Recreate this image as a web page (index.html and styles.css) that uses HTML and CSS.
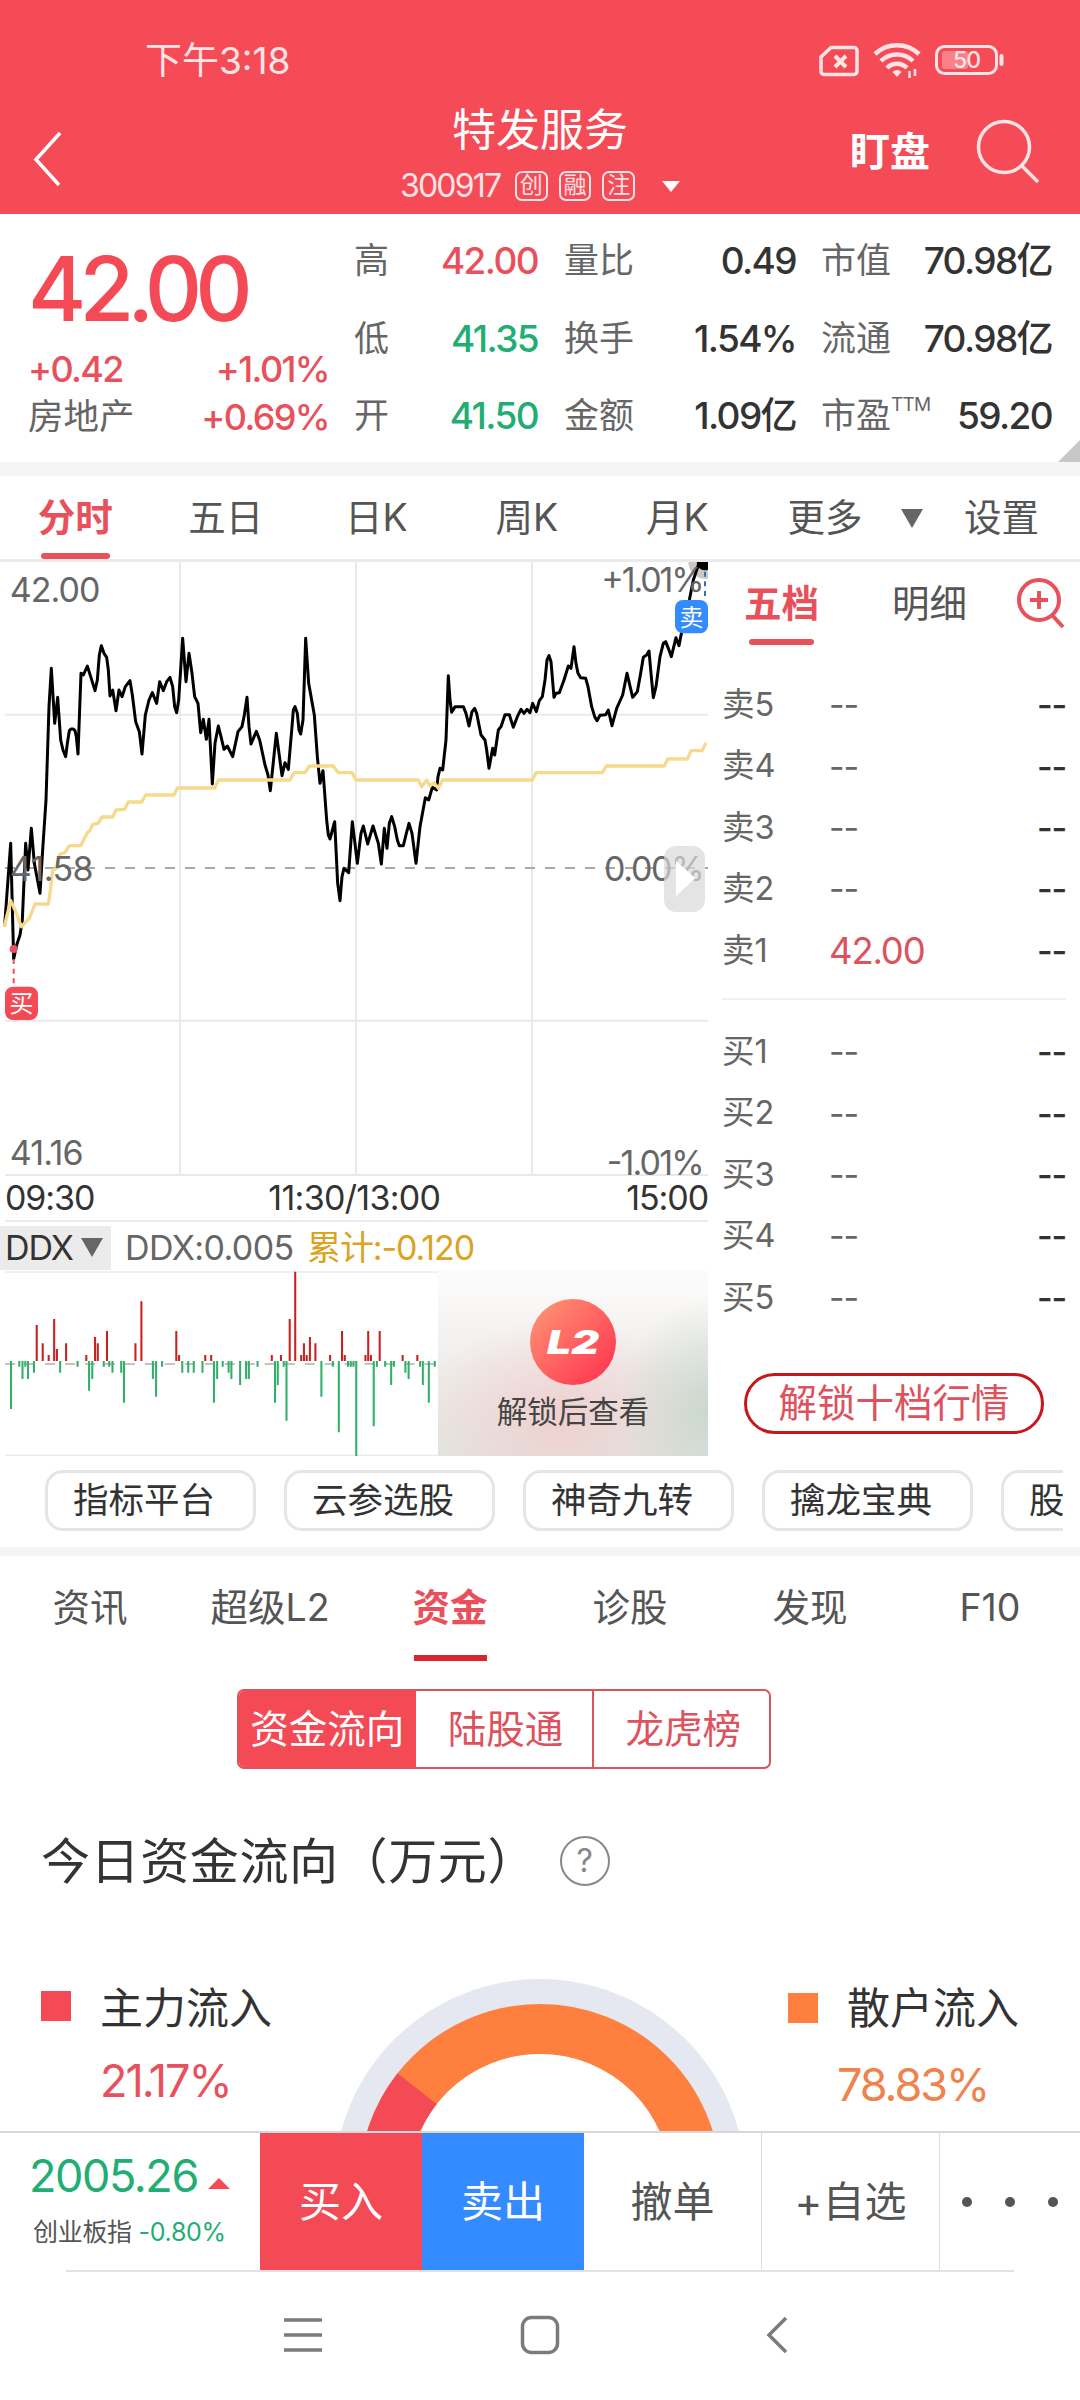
FILE: index.html
```html
<!DOCTYPE html>
<html lang="zh-CN">
<head>
    <meta charset="UTF-8">
    <meta name="viewport" content="width=device-width, initial-scale=1.0">
    <title>特发服务 300917</title>
    <link rel="stylesheet" href="styles.css">
</head>
<body>
    <header class="header">
        <div class="status-bar">
            <span class="clock">下午3:18</span>
            <svg class="status-icons" width="190" height="40" viewBox="816 40 190 40" fill="none" stroke="#ffe3e5" stroke-width="3">
                <path d="M831 47.500h23a3 3 0 0 1 3 3v21a3 3 0 0 1-3 3h-30a3 3 0 0 1-3-3V57z" stroke-width="3.500"/>
                <path d="M835 56l11 11M846 56l-11 11" stroke-width="4"/>
                <path d="M875 54a32 32 0 0 1 44 0M881 61a23 23 0 0 1 32 0M887 68a14 14 0 0 1 20 0" stroke-width="4.500"/>
                <path d="M897 77l-4.500-5a6 6 0 0 1 9 0z" fill="#ffe3e5" stroke="none"/>
                <path d="M909.500 71v7M915 69v7" stroke-width="2.500"/>
                <rect x="936.500" y="46.500" width="60" height="27" rx="8"/>
                <rect x="942" y="51" width="26" height="18" rx="3" fill="#fff" fill-opacity=".3" stroke="none"/>
                <path d="M1001.500 56v8" stroke-width="4" stroke-linecap="round"/>
                <text class="battery-text" x="966.500" y="68" text-anchor="middle">50</text>
            </svg>
        </div>
        <div class="title-bar">
            <svg class="back" width="40" height="60" viewBox="28 130 40 60" fill="none" stroke="#fff" stroke-width="3.500">
                <path d="M60 133L36 159.500 59 185"/>
            </svg>
            <div class="title">
                <h1>特发服务</h1>
                <div class="code">
                    <span class="code-num">300917</span>
                    <i class="tag">创</i><i class="tag">融</i><i class="tag">注</i>
                    <i class="caret"></i>
                </div>
            </div>
            <div class="actions">
                <b class="watch">盯盘</b>
                <svg width="68" height="68" viewBox="974 118 68 68" fill="none" stroke="#ffe3e5" stroke-width="3.500">
                    <circle cx="1004" cy="147" r="25.500"/>
                    <path d="M1021 165l17 17"/>
                </svg>
            </div>
        </div>
    </header>

    <section class="quote">
        <div class="price-box">
            <div class="price num">42.00</div>
            <div class="price-row red"><span class="num">+0.42</span><span class="num">+1.01%</span></div>
            <div class="price-row"><span class="sector">房地产</span><span class="num red">+0.69%</span></div>
        </div>
        <dl class="stats stats-a">
            <div><dt>高</dt><dd class="red">42.00</dd></div>
            <div><dt>低</dt><dd class="green">41.35</dd></div>
            <div><dt>开</dt><dd class="green">41.50</dd></div>
        </dl>
        <dl class="stats stats-b">
            <div><dt>量比</dt><dd>0.49</dd></div>
            <div><dt>换手</dt><dd>1.54%</dd></div>
            <div><dt>金额</dt><dd>1.09亿</dd></div>
        </dl>
        <dl class="stats stats-c">
            <div><dt>市值</dt><dd>70.98亿</dd></div>
            <div><dt>流通</dt><dd>70.98亿</dd></div>
            <div><dt>市盈<sup>TTM</sup></dt><dd>59.20</dd></div>
        </dl>
        <i class="corner"></i>
    </section>

    <nav class="period-tabs">
        <span class="active">分时</span>
        <span>五日</span>
        <span>日K</span>
        <span>周K</span>
        <span>月K</span>
        <span class="more">更多<i class="caret-down"></i></span>
        <span class="setting">设置</span>
    </nav>

    <main class="market">
        <div class="charts">
            <svg class="price-chart" width="708" height="614" viewBox="0 66 2124 1842">
                <path d="M540 66V1905M1068 66V1905M1596 66V1905M15 524H2124M15 1442H2124M15 1905H2124" stroke="#e9e9e9" stroke-width="6"/>
                <path d="M15 984H2124" stroke="#aaa" stroke-width="6" stroke-dasharray="30 30"/>
                <circle cx="2115" cy="66" r="50" fill="#c8c8c8"/>
                <g fill="none" stroke-linejoin="round" stroke-linecap="round">
                    <polyline stroke="#000" stroke-width="9" points="14,1155 32,910 41,1257 50,1215 60,1185 67,1140 77,910 84,990 94,865 103,970 120,1060 128,930 138,780 147,500 154,385 164,550 173,472 182,600 189,630 197,650 202,610 208,572 213,567 220,567 225,572 229,590 234,642 243,400 250,405 262,378 272,410 285,452 292,420 298,345 304,317 312,340 320,352 325,390 330,468 338,450 348,512 357,450 366,470 376,440 390,422 397,465 407,545 418,575 426,642 436,525 447,480 457,458 470,490 479,425 490,452 500,425 510,412 518,440 524,500 530,518 536,480 548,295 558,425 567,340 576,400 584,470 594,490 602,578 610,538 619,598 627,538 637,732 645,610 655,558 663,590 672,628 682,618 698,650 714,575 726,560 733,525 741,472 747,560 753,612 769,574 779,600 795,675 804,705 811,752 829,580 846,707 855,668 865,688 876,560 880,510 885,500 892,520 897,570 902,582 909,540 917,295 926,430 943,525 952,650 960,730 969,692 980,840 985,885 990,897 1004,845 1013,1030 1020,1082 1026,1010 1032,985 1046,998 1057,845 1072,970 1083,880 1090,858 1103,912 1119,858 1135,910 1144,972 1153,865 1161,925 1168,850 1175,830 1184,860 1192,900 1198,917 1210,917 1219,880 1227,850 1236,880 1248,970 1260,860 1276,773 1286,780 1297,742 1310,750 1314,710 1320,685 1328,690 1338,600 1345,407 1350,480 1355,517 1365,500 1390,500 1398,520 1407,558 1416,515 1424,505 1430,520 1443,585 1455,600 1460,630 1467,685 1478,625 1484,645 1495,570 1503,560 1515,524 1528,524 1540,562 1552,530 1563,508 1572,520 1581,508 1590,518 1598,490 1609,515 1618,482 1627,470 1635,420 1641,360 1647,347 1653,365 1662,472 1668,460 1678,458 1692,420 1705,378 1713,385 1722,320 1728,370 1734,400 1742,413 1757,415 1764,440 1775,500 1784,530 1791,542 1800,526 1817,524 1825,510 1836,557 1850,505 1868,465 1881,400 1898,472 1912,455 1922,400 1930,352 1940,345 1947,333 1953,400 1960,473 1968,440 1980,350 1990,310 1997,305 2005,325 2014,350 2028,293 2037,317 2050,250 2068,180 2080,120 2100,60"/>
                    <polyline stroke="#f7d98e" stroke-width="10" points="14,1155 32,1082 45,1110 64,1160 88,1135 105,1092 145,1092 150,1060 158,990 170,985 180,942 195,938 208,917 242,917 262,878 270,872 278,853 294,850 306,831 338,831 348,810 374,808 385,786 425,786 437,765 522,765 532,744 644,744 655,720 870,720 882,698 915,698 928,678 1000,678 1014,698 1056,698 1068,720 1255,720 1265,740 1280,720 1290,738 1302,728 1315,745 1328,720 1597,720 1608,698 1807,698 1819,678 1993,678 2003,657 2062,657 2073,632 2106,632 2116,612"/>
                </g>
                <circle cx="2115" cy="66" r="25"/>
                <path d="M2115 95V178" stroke="#3a6fb5" stroke-width="6" stroke-dasharray="15 14"/>
                <circle cx="41" cy="1227" r="12" fill="#e8515c"/>
                <path d="M41 1257V1336" stroke="#e8515c" stroke-width="6" stroke-dasharray="15 14"/>
                <g class="axis-text">
                    <text x="29" y="186" textLength="272">42.00</text>
                    <text x="29" y="1022" textLength="252">41.58</text>
                    <text x="29" y="1875" textLength="222">41.16</text>
                    <text x="1804" y="156" textLength="310">+1.01%</text>
                    <text x="1812" y="1022" textLength="302">0.00%</text>
                    <text x="1820" y="1905" textLength="294">-1.01%</text>
                </g>
                <rect x="15" y="1340" width="99" height="100" rx="24" fill="#f44a56"/>
                <text class="mark" x="64.500" y="1417">买</text>
                <rect x="2025" y="180" width="99" height="100" rx="24" fill="#348aff"/>
                <text class="mark" x="2074.500" y="257">卖</text>
                <rect x="1992" y="918" width="123" height="198" rx="36" fill="#d8d8d8" fill-opacity=".7"/>
                <path d="M2028 962V1068L2086 1015z" fill="#fff"/>
            </svg>
            <div class="time-axis"><span>09:30</span><span class="noon">11:30/13:00</span><span>15:00</span></div>
            <div class="ddx-bar">
                <span class="ddx-select">DDX<i class="caret-down"></i></span>
                <span class="ddx-value">DDX:0.005</span>
                <span class="ddx-sum">累计:-0.120</span>
            </div>
            <div class="ddx-row">
                <svg width="438" height="186" viewBox="0 210 954 558" preserveAspectRatio="none" fill="none" stroke-width="4.500">
                    <path d="M11 216H954M11 766H954" stroke="#ebebeb"/>
                    <path d="M11 492H954" stroke="#b0b0b0" stroke-width="5" stroke-dasharray="22 21.500"/>
                    <path stroke="#c92020" d="M80 483V375M93 483V430M106 483V465M118 483V357M124 483V447M144 483V430M188 483V465M207 483V411M213 483V430M233 483V393M295 483V430M308 483V304M384 483V393M390 483V465M447 483V465M460 483V465M592 483V465M612 483V465M631 483V357M643 483V215M656 483V465M662 483V430M668 483V465M675 483V411M687 483V430M719 483V465M745 483V393M751 483V465M796 483V465M802 483V393M808 483V465M827 483V393M877 483V465M909 483V465"/>
                    <path stroke="#32b068" d="M24 483V627M42 483V500M49 483V537M55 483V500M61 483V537M74 483V518M131 483V518M169 483V500M194 483V572M201 483V537M226 483V500M238 483V500M245 483V518M264 483V518M270 483V608M333 483V537M340 483V590M353 483V500M397 483V518M410 483V518M422 483V518M441 483V518M466 483V608M473 483V537M485 483V500M498 483V518M504 483V537M523 483V555M536 483V537M542 483V537M561 483V500M599 483V608M605 483V555M618 483V500M624 483V662M700 483V590M725 483V500M738 483V697M758 483V500M764 483V500M770 483V500M776 483V768M814 483V679M821 483V500M839 483V500M852 483V555M858 483V500M883 483V518M890 483V537M915 483V500M921 483V555M934 483V608M947 483V500"/>
                </svg>
                <div class="locked">
                    <span class="l2"><b>L2</b></span>
                    <span>解锁后查看</span>
                </div>
            </div>
        </div>

        <aside class="book">
            <div class="book-tabs">
                <span class="active">五档</span>
                <span>明细</span>
                <svg width="50" height="56" viewBox="1015 576 50 56" fill="none" stroke="#e8515c" stroke-width="4">
                    <circle cx="1039" cy="600" r="20"/>
                    <path d="M1030 600h18M1039 591v18M1052 615l11 12"/>
                </svg>
            </div>
            <ul class="levels sell">
                <li><span>卖5</span><em>--</em><b>--</b></li>
                <li><span>卖4</span><em>--</em><b>--</b></li>
                <li><span>卖3</span><em>--</em><b>--</b></li>
                <li><span>卖2</span><em>--</em><b>--</b></li>
                <li><span>卖1</span><em class="red">42.00</em><b>--</b></li>
            </ul>
            <ul class="levels buy">
                <li><span>买1</span><em>--</em><b>--</b></li>
                <li><span>买2</span><em>--</em><b>--</b></li>
                <li><span>买3</span><em>--</em><b>--</b></li>
                <li><span>买4</span><em>--</em><b>--</b></li>
                <li><span>买5</span><em>--</em><b>--</b></li>
            </ul>
            <button class="unlock">解锁十档行情</button>
        </aside>
    </main>

    <div class="chips">
        <span>指标平台</span>
        <span>云参选股</span>
        <span>神奇九转</span>
        <span>擒龙宝典</span>
        <span>股</span>
    </div>

    <nav class="info-tabs">
        <span>资讯</span>
        <span>超级L2</span>
        <span class="active">资金</span>
        <span>诊股</span>
        <span>发现</span>
        <span>F10</span>
    </nav>

    <section class="funds">
        <div class="segment">
            <span class="active">资金流向</span>
            <span>陆股通</span>
            <span>龙虎榜</span>
        </div>
        <h2>今日资金流向（万元）<i class="help">?</i></h2>
        <div class="flow">
            <div class="legend main-in">
                <p><i></i>主力流入</p>
                <strong class="num">21.17%</strong>
            </div>
            <svg width="420" height="155" viewBox="330 1977 420 155">
                <circle cx="540" cy="2185" r="206" fill="#e5e8f1"/>
                <circle cx="540" cy="2185" r="156" fill="none" stroke="#ff7f3f" stroke-width="50"/>
                <path d="M397.600 2073.300A181 181 0 0 0 359 2185H409A131 131 0 0 1 436.900 2104.200z" fill="#f44a56"/>
                <circle cx="540" cy="2185" r="131" fill="#fff"/>
            </svg>
            <div class="legend retail-in">
                <p><i></i>散户流入</p>
                <strong class="num">78.83%</strong>
            </div>
        </div>
    </section>

    <footer class="trade-bar">
        <div class="index">
            <div class="index-value"><span>2005.26</span><i class="caret-up"></i></div>
            <div class="index-name">创业板指 <span class="green">-0.80%</span></div>
        </div>
        <span class="btn-buy">买入</span>
        <span class="btn-sell">卖出</span>
        <span class="btn">撤单</span>
        <span class="btn">+自选</span>
        <span class="dots"><i></i><i></i><i></i></span>
    </footer>

    <div class="system-nav">
        <svg width="44" height="44" viewBox="0 0 44 44" fill="none" stroke="#7b7b7b" stroke-width="3.500"><path d="M3 7h38M3 22h38M3 37h38"/></svg>
        <svg width="44" height="44" viewBox="0 0 44 44" fill="none" stroke="#7b7b7b" stroke-width="3.500"><rect x="4.500" y="4.500" width="35" height="35" rx="9"/></svg>
        <svg width="44" height="44" viewBox="0 0 44 44" fill="none" stroke="#7b7b7b" stroke-width="3.500"><path d="M31 5L14 22l17 17"/></svg>
    </div>
</body>
</html>
```
FILE: styles.css
```css
* {
    box-sizing: border-box;
}
body {
    width: 1080px;
    height: 2400px;
    margin: 0;
    overflow: hidden;
    background: #fff;
    color: #333;
    font-family: Inter, "Noto Sans CJK SC", sans-serif;
    font-size: 36px;
    line-height: 1;
    white-space: nowrap;
}
i, em {
    font-style: normal;
}
h1, h2, p, dl, dd, ul {
    margin: 0;
    padding: 0;
    font-weight: 400;
}
svg {
    display: block;
    flex: none;
}
.num {
    letter-spacing: -0.045em;
}
.red {
    color: #e8515c;
}
.green {
    color: #22ad74;
}

/* header */
.header {
    height: 214px;
    background: #f54b57;
    color: #fff;
}
.status-bar {
    display: flex;
    justify-content: space-between;
    height: 100px;
    padding: 40px 74px 0 145px;
    color: #ffe3e5;
}
.clock {
    font-size: 37px;
    line-height: 41px;
}
.battery-text {
    fill: #ffe3e5;
    stroke: none;
    font-size: 23px;
    font-weight: 500;
    letter-spacing: -1px;
}
.title-bar {
    display: grid;
    grid-template-columns: 1fr 280px 1fr;
    height: 114px;
    padding: 0 38px 0 28px;
}
.back {
    margin-top: 30px;
}
.title {
    text-align: center;
    margin-left: 5px;
    margin-right: -5px;
}
.title h1 {
    font-size: 44px;
    line-height: 61px;
}
.code {
    display: flex;
    align-items: center;
    height: 50px;
}
.code-num {
    width: 116px;
    text-align: left;
    font-size: 32px;
    letter-spacing: -1.8px;
    color: #ffe3e5;
}
.tag {
    width: 33px;
    height: 30px;
    margin-right: 11px;
    border: 2px solid #ffe3e5;
    border-radius: 7px;
    font-size: 23px;
    line-height: 25px;
    color: #ffe3e5;
}
.caret {
    margin-left: 16px;
    border: 9px solid transparent;
    border-top: 11px solid #fff;
    border-bottom: 0;
}
.actions {
    display: flex;
    justify-content: flex-end;
    gap: 44px;
    padding-top: 18px;
}
.watch {
    font-size: 40px;
    line-height: 68px;
}

/* quote */
.quote {
    position: relative;
    display: flex;
    height: 262px;
    padding-left: 28px;
    border-bottom: 14px solid #f5f5f5;
}
.price-box {
    width: 301px;
    padding-top: 28px;
}
.price {
    color: #f44a56;
    font-size: 89px;
    font-weight: 500;
    line-height: 94px;
    letter-spacing: -7px;
}
.price-row {
    display: flex;
    justify-content: space-between;
    height: 48px;
    align-items: center;
    font-weight: 500;
    font-size: 36px;
}
.price-box .price + .price-row {
    margin-top: 9px;
}
.sector {
    font-size: 35.500px;
    font-weight: 400;
    color: #666;
}
.stats div {
    display: flex;
    justify-content: space-between;
    align-items: center;
    height: 77.5px;
}
.stats {
    padding-top: 8px;
}
.stats dt {
    display: flex;
    font-size: 35px;
    color: #666;
}
.stats dd {
    font-size: 37px;
    font-weight: 500;
    letter-spacing: -1.6px;
}
.stats sup {
    font-size: 19px;
    line-height: 14px;
    letter-spacing: -0.8px;
    margin-top: 0;
}
.stats-a {
    width: 184px;
    margin-left: 25px;
}
.stats-b {
    width: 232px;
    margin-left: 26px;
}
.stats-c {
    width: 231px;
    margin-left: 25px;
}
.corner {
    position: absolute;
    right: 0;
    bottom: 0;
    border-left: 22px solid transparent;
    border-bottom: 22px solid #c8c8c8;
}

/* period tabs */
.period-tabs {
    display: flex;
    height: 86px;
    border-bottom: 3px solid #eaeaea;
    font-size: 37.500px;
    line-height: 84px;
    color: #555;
}
.period-tabs span {
    width: 150.5px;
    text-align: center;
}
.period-tabs .active {
    color: #e8515c;
    font-weight: 700;
}
.period-tabs .active::after {
    content: "";
    display: block;
    width: 69px;
    height: 6px;
    margin: -7px auto 0;
    border-radius: 3px;
    background: #e8515c;
}
.period-tabs .more {
    display: flex;
    align-items: center;
    gap: 38px;
    width: 172px;
    margin-left: 35px;
    height: 84px;
}
.period-tabs .setting {
    width: 80px;
    margin-left: 2px;
}
.caret-down {
    border: 11px solid transparent;
    border-top: 19px solid #666;
    border-bottom: 0;
}

/* charts */
.market {
    display: flex;
    height: 894px;
}
.charts {
    width: 708px;
}
.axis-text {
    font-size: 102px;
    fill: #666;
}
.mark {
    font-size: 72px;
    fill: #fff;
    text-anchor: middle;
}
.time-axis {
    display: flex;
    justify-content: space-between;
    height: 46px;
    margin-left: 5px;
    border-bottom: 2px solid #ebebeb;
    font-size: 34px;
    line-height: 44px;
    letter-spacing: -1.1px;
}
.time-axis .noon {
    margin-right: 12px;
    letter-spacing: -0.7px;
}
.ddx-bar {
    display: flex;
    align-items: center;
    height: 48px;
    padding-top: 3px;
    font-size: 34px;
    letter-spacing: -1.1px;
}
.ddx-select {
    display: flex;
    align-items: center;
    gap: 8px;
    width: 111px;
    height: 44px;
    padding-left: 5px;
    background: #ebebeb;
}
.ddx-value {
    margin-left: 14px;
    width: 182px;
    color: #666;
    letter-spacing: -0.6px;
}
.ddx-sum {
    color: #dba31f;
}
.ddx-row {
    display: flex;
    height: 186px;
}
.locked {
    display: flex;
    flex-direction: column;
    align-items: center;
    width: 270px;
    padding-top: 29px;
    background:
        radial-gradient(ellipse 90px 110px at 100% 75%, rgba(200, 213, 203, .9), transparent),
        radial-gradient(ellipse 150px 100px at 45% 80%, rgba(240, 205, 205, .9), transparent),
        linear-gradient(#fdfcfc, #f0eeec 50%, #e1e6e0);
    font-size: 30.500px;
    color: #444;
}
.l2 {
    display: flex;
    align-items: center;
    justify-content: center;
    width: 86px;
    height: 86px;
    margin-bottom: 12px;
    border-radius: 50%;
    background: linear-gradient(135deg, #ff9a76, #ff3d54 85%);
    color: #fff;
}
.l2 b {
    font-size: 33px;
    font-weight: 900;
    font-style: italic;
    transform: scaleX(1.3);
}

/* order book */
.book {
    width: 372px;
    padding: 0 14px;
}
.book-tabs {
    display: flex;
    height: 112px;
    padding: 15px 0 0 22px;
    font-size: 37.500px;
    line-height: 54px;
    color: #555;
}
.book-tabs span {
    width: 74px;
    margin-right: 74px;
}
.book-tabs span + span {
    margin-right: 49px;
}
.book-tabs svg {
    margin-top: -1px;
}
.book-tabs .active {
    color: #e8515c;
    font-weight: 700;
}
.book-tabs .active::after {
    content: "";
    display: block;
    width: 65px;
    height: 6px;
    margin: 8px auto 0;
    border-radius: 3px;
    background: #e8515c;
}
.levels {
    list-style: none;
}
.levels li {
    display: grid;
    grid-template-columns: 107px 1fr auto;
    align-items: center;
    height: 61.4px;
    padding: 1px 0 0 0;
    font-size: 34px;
}
.levels span {
    color: #666;
    font-size: 32.500px;
}
.levels em {
    color: #666;
    letter-spacing: -1.2px;
}
.levels .red {
    color: #dd525d;
    font-size: 36.500px;
}
.levels b {
    font-weight: 500;
    letter-spacing: -1.2px;
}
.sell {
    height: 326px;
    border-bottom: 2px solid #f0f0f0;
}
.buy {
    padding-top: 21px;
}
.unlock {
    display: block;
    width: 300px;
    height: 61px;
    margin: 45px 0 0 22px;
    padding: 0;
    border: 3px solid #c8161d;
    border-radius: 31px;
    background: #fff;
    color: #dd525d;
    font: inherit;
    font-size: 38.500px;
    line-height: 52px;
}

/* chips */
.chips {
    display: flex;
    gap: 28px;
    height: 91px;
    margin-right: 17px;
    padding: 14px 0 0 45px;
    overflow: hidden;
}
.chips span {
    flex: none;
    width: 211px;
    height: 61px;
    padding-left: 25px;
    border: 3px solid #e5e5e5;
    border-radius: 18px;
    font-size: 35.500px;
    line-height: 55px;
}

/* info tabs */
.info-tabs {
    display: grid;
    grid-template-columns: repeat(6, 1fr);
    height: 120px;
    border-top: 9px solid #f5f5f5;
    text-align: center;
    font-size: 37.500px;
    line-height: 104px;
    color: #555;
}
.info-tabs .active {
    color: #e8515c;
    font-weight: 700;
}
.info-tabs .active::after {
    content: "";
    display: block;
    width: 73px;
    height: 6px;
    margin: -5px auto 0;
    background: #d9262c;
}

/* funds */
.funds {
    height: 464px;
    overflow: hidden;
}
.segment {
    display: grid;
    grid-template-columns: repeat(3, 1fr);
    width: 534px;
    height: 80px;
    margin: 22px 0 0 237px;
    border: 2px solid #dd525d;
    border-radius: 7px;
    overflow: hidden;
    text-align: center;
    font-size: 38.500px;
    line-height: 76px;
    color: #dd525d;
}
.segment span + span {
    padding-left: 3px;
}
.segment span + span + span {
    border-left: 2px solid #dd525d;
}
.segment .active {
    background: #f44a56;
    color: #fff;
}
.funds h2 {
    display: flex;
    align-items: center;
    height: 60px;
    margin: 62px 0 0 41px;
    font-size: 49px;
    letter-spacing: 0.600px;
}
.help {
    width: 50px;
    height: 50px;
    margin-left: 23px;
    border: 2.500px solid #888;
    border-radius: 50%;
    text-align: center;
    font-size: 32px;
    line-height: 46px;
    color: #888;
}
.flow {
    display: grid;
    grid-template-columns: 330px 420px 330px;
    margin-top: 86px;
}
.legend p {
    display: flex;
    align-items: center;
    height: 44px;
    font-size: 43px;
}
.legend i {
    width: 30px;
    height: 30px;
    margin: -4px 29px 0 0;
    background: #f44a56;
}
.legend strong {
    display: block;
    font-size: 45px;
    font-weight: 400;
}
.main-in {
    padding: 9px 0 0 41px;
}
.main-in strong {
    margin: 28px 0 0 59px;
    color: #e8515c;
}
.retail-in {
    padding: 9px 0 0 38px;
}
.retail-in i {
    margin-top: 0;
    background: #ff7f3f;
}
.retail-in strong {
    margin: 32px 0 0 49px;
    color: #f0834d;
}

/* trade bar */
.trade-bar {
    display: flex;
    height: 139px;
    border-top: 2px solid #d8d8d8;
    font-size: 42px;
    line-height: 138px;
    text-align: center;
    color: #555;
}
.index {
    width: 260px;
    padding: 17px 0 0 29px;
    text-align: left;
    line-height: 1;
}
.index-value {
    display: flex;
    align-items: center;
    height: 50px;
    gap: 10px;
    color: #22ad74;
    font-size: 45px;
    letter-spacing: -1.4px;
}
.caret-up {
    margin-top: 16px;
    border: 11px solid transparent;
    border-bottom: 11px solid #f44a56;
    border-top: 0;
}
.index-name {
    margin: 20px 0 0 4px;
    font-size: 25px;
    letter-spacing: -0.3px;
}
.btn-buy, .btn-sell {
    width: 162px;
    background: #f44a56;
    color: #fff;
}
.btn-sell {
    background: #348aff;
}
.btn {
    width: 178px;
    border-right: 1.500px solid #ddd;
}
.dots {
    display: flex;
    flex: 1;
    align-items: center;
    justify-content: space-between;
    padding: 0 22px 0 22px;
}
.dots i {
    width: 10px;
    height: 10px;
    border-radius: 50%;
    background: #555;
}

/* system navigation */
.system-nav {
    display: flex;
    justify-content: center;
    gap: 193px;
    margin: 0 66px;
    padding-top: 41px;
    border-top: 2px solid #e2e2e2;
}
```
